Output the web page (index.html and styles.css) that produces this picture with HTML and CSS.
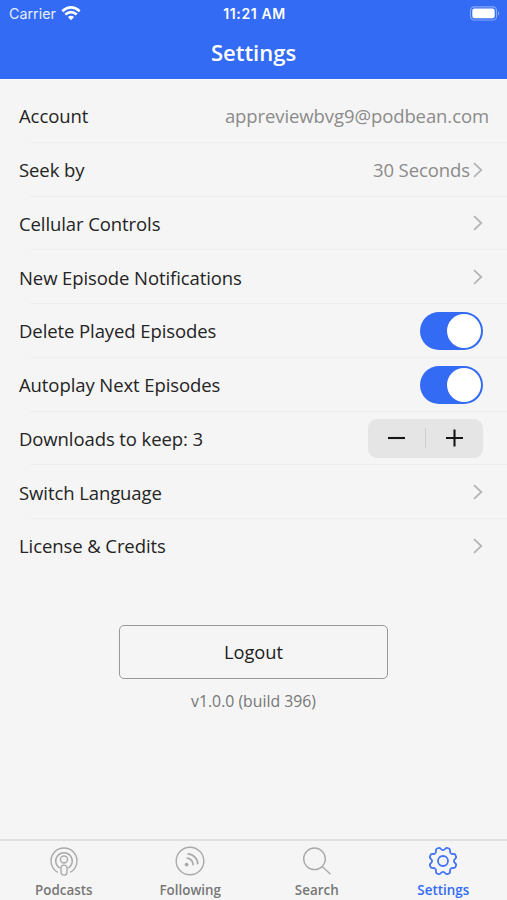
FILE: index.html
```html
<!DOCTYPE html>
<html lang="en">
<head>
<meta charset="utf-8">
<title>Settings</title>
<link rel="stylesheet" href="styles.css">
</head>
<body>
<div class="app">
  <header class="header">
    <div class="status">
      <div class="carrier"><span>Carrier</span>
        <svg width="20" height="15" viewBox="0 0 20 15" fill="none" stroke="#fff" stroke-width="2.6"><path d="M1.3 5.2Q10-2.4 18.7 5.2"/><path d="M4.3 8.6Q10 3.6 15.7 8.6"/><path d="M6.9 11.1Q10 8.5 13.1 11.1L10 14.2Z" fill="#fff" stroke="none"/></svg>
      </div>
      <span class="time">11:21 AM</span>
      <svg class="battery" width="31" height="15" viewBox="0 0 31 15"><rect x="1.5" y=".8" width="26" height="13.2" rx="3.8" fill="none" stroke="#fff" stroke-opacity=".42" stroke-width="1.2"/><rect x="3.3" y="2.6" width="22.4" height="9.6" rx="2.2" fill="#fff"/><path d="M29 5.2Q31.4 7.4 29 9.6Z" fill="#fff" fill-opacity=".45"/></svg>
    </div>
    <h1 class="title">Settings</h1>
  </header>
  <main class="content">
    <ul class="list">
      <li class="row account"><span>Account</span><span class="value email">appreviewbvg9@podbean.com</span></li>
      <li class="row"><span>Seek by</span><span class="end"><span class="value">30 Seconds</span><svg class="chevron" viewBox="0 0 10 16"><path d="M1 1.2 8.3 8 1 14.8"/></svg></span></li>
      <li class="row"><span>Cellular Controls</span><svg class="chevron" viewBox="0 0 10 16"><path d="M1 1.2 8.3 8 1 14.8"/></svg></li>
      <li class="row"><span>New Episode Notifications</span><svg class="chevron" viewBox="0 0 10 16"><path d="M1 1.2 8.3 8 1 14.8"/></svg></li>
      <li class="row"><span>Delete Played Episodes</span><span class="switch"><span class="knob"></span></span></li>
      <li class="row"><span>Autoplay Next Episodes</span><span class="switch"><span class="knob"></span></span></li>
      <li class="row"><span>Downloads to keep: 3</span>
        <span class="stepper"><svg class="step" viewBox="0 0 18 18"><path d="M.5 9h17"/></svg><i class="split"></i><svg class="step" viewBox="0 0 18 18"><path d="M.5 9h17M9 .5v17"/></svg></span></li>
      <li class="row"><span>Switch Language</span><svg class="chevron" viewBox="0 0 10 16"><path d="M1 1.2 8.3 8 1 14.8"/></svg></li>
      <li class="row"><span>License &amp; Credits</span><svg class="chevron" viewBox="0 0 10 16"><path d="M1 1.2 8.3 8 1 14.8"/></svg></li>
    </ul>
    <button class="logout">Logout</button>
    <p class="version">v1.0.0 (build 396)</p>
  </main>
  <nav class="tabs">
    <a class="tab"><svg class="icon" viewBox="-15 -15 30 30"><path d="M-6.2 11.4A13 13 0 1 1 6.2 11.4"/><path d="M-4.2 7.2A8.3 8.3 0 1 1 4.2 7.2"/><circle cy="-1.5" r="3.5"/><rect x="-3" y="4.1" width="6" height="10" rx="2.8"/></svg><span>Podcasts</span></a>
    <a class="tab"><svg class="icon" viewBox="-15 -15 30 30"><circle r="13.8"/><path class="waves" d="M-3.4-2.8A6.5 6.5 0 0 1 3.2 4.3M-2.5-7.2A10.3 10.3 0 0 1 7.7 3.2"/><circle class="dot" cx="-3.4" cy="3.6" r="1.9"/></svg><span>Following</span></a>
    <a class="tab"><svg class="icon" viewBox="-15 -15 30 30"><circle cx="-2.5" cy="-2.2" r="10.8"/><path d="M5.2 5.4 13.5 13.3"/></svg><span>Search</span></a>
    <a class="tab active"><svg class="icon" viewBox="-15 -15 30 30"><defs><path id="tooth" d="M0-10.9C2.8-10.9 2.2-14.6 5.28-12.75 8.75-11.8 5.7-9.7 7.71-7.71"/></defs><use href="#tooth"/><use href="#tooth" transform="rotate(45)"/><use href="#tooth" transform="rotate(90)"/><use href="#tooth" transform="rotate(135)"/><use href="#tooth" transform="rotate(180)"/><use href="#tooth" transform="rotate(225)"/><use href="#tooth" transform="rotate(270)"/><use href="#tooth" transform="rotate(315)"/><circle r="5"/></svg><span>Settings</span></a>
  </nav>
</div>
</body>
</html>
```
FILE: styles.css
```css
* { box-sizing: border-box; }
body { margin: 0; background: #f5f5f5; color: #242424; font-family: "Open Sans", sans-serif; }
.app { width: 507px; height: 900px; display: flex; flex-direction: column; overflow: hidden; }
.header { height: 79px; flex: none; background: #336bf5; color: #fff; }
.status { height: 27px; padding: 0 7px 0 9px; display: grid; grid-template-columns: 1fr auto 1fr; align-items: center; font-family: Inter, sans-serif; font-size: 14.3px; }
.carrier { display: flex; align-items: center; gap: 5px; color: #e7eeff; }
.time { font-weight: 600; font-size: 14px; letter-spacing: .6px; }
.battery { justify-self: end; }
.title { margin: 9px 0 0; font-size: 22px; line-height: 32px; font-weight: 600; text-align: center; }
.content { flex: 1; padding-top: 9px; border-top: 1px solid #f8f7f4; display: flex; flex-direction: column; align-items: center; }
.list { width: 100%; margin: 0; padding: 0; list-style: none; }
.row { height: 53.75px; padding: 0 24.5px 0 19px; display: flex; align-items: center; justify-content: space-between; font-size: 18.5px; letter-spacing: -.09px; background: linear-gradient(#eee, #eee) 30px 100% / 100% 1px no-repeat; }
.row:last-child { background: none; }
.account { padding-right: 18px; }
.value { color: #8b8b8b; }
.end { display: flex; align-items: center; gap: 2.5px; }
.chevron { width: 10px; height: 16px; fill: none; stroke: #b5b5b5; stroke-width: 1.8; }
.switch { width: 62.5px; height: 38px; padding: 2px; border-radius: 19px; background: #336bf5; display: flex; justify-content: flex-end; }
.knob { width: 34px; height: 34px; border-radius: 50%; background: #fff; }
.stepper { width: 115px; height: 39px; border-radius: 9px; background: #e5e5e5; display: flex; align-items: center; }
.step { flex: 1; height: 18px; fill: none; stroke: #161616; stroke-width: 2.1; }
.split { width: 1px; height: 20px; background: #cfcfcf; }
.logout { width: 269px; height: 54px; margin: 52px 0 0; padding: 0; border: 1.5px solid #999; border-radius: 5px; background: none; color: #202020; font: 18.3px "Open Sans", sans-serif; }
.version { margin: 12px 0 0; font-size: 15.8px; line-height: 20px; color: #777; }
.tabs { height: 61px; flex: none; border-top: 2px solid #e0e0e0; display: grid; grid-template-columns: repeat(4, 1fr); padding: 5px .5px 0; }
.tab { display: flex; flex-direction: column; align-items: center; color: #777; font-size: 13.4px; font-weight: 600; line-height: 18px; }
.tab span { margin-top: 5px; }
.icon { width: 30px; height: 30px; fill: none; stroke: #aaa; stroke-width: 1.4; }
.waves { stroke-width: 1.8; }
.dot { fill: #aaa; stroke: none; }
.active { color: #336bf5; }
.active .icon { stroke: #4274f5; stroke-width: 1.8; }
```
